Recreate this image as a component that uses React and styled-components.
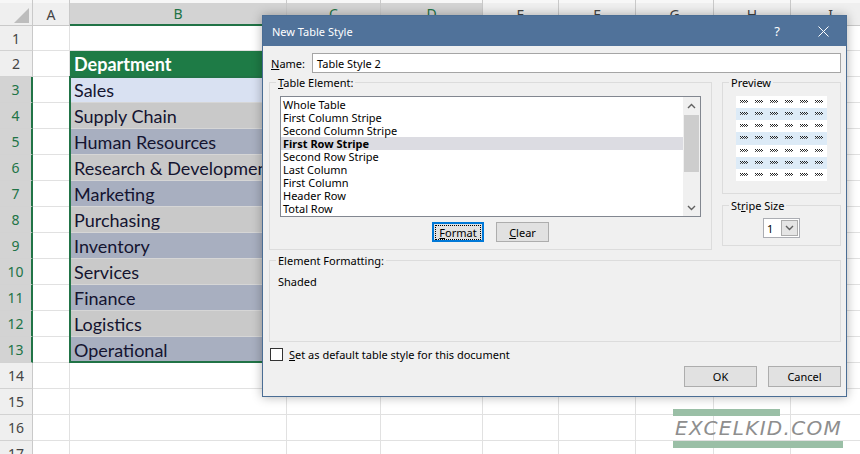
import React from 'react';
import styled, { createGlobalStyle } from 'styled-components';

const GlobalStyle = createGlobalStyle`
  html, body { margin: 0; padding: 0; background: #fff; }
  body { width: 860px; height: 454px; overflow: hidden; font-family: "Noto Sans", sans-serif; }
`;

const COLS = [33, 37, 217, 94, 102, 76, 77, 78, 77, 80];
const LETTERS = ['A', 'B', 'C', 'D', 'E', 'F', 'G', 'H', 'I'];
const SELECTED_COLS = ['B', 'C', 'D'];
const DEPARTMENTS = [
  'Sales', 'Supply Chain', 'Human Resources', 'Research & Development', 'Marketing',
  'Purchasing', 'Inventory', 'Services', 'Finance', 'Logistics', 'Operational',
];
const ELEMENTS = [
  'Whole Table', 'First Column Stripe', 'Second Column Stripe', 'First Row Stripe',
  'Second Row Stripe', 'Last Column', 'First Column', 'Header Row', 'Total Row',
];

const rowFill = (row) => {
  if (row === 2) return '#1e7b46';
  if (row === 3) return '#d9e1f2';
  if (row > 3 && row <= 13) return row % 2 === 0 ? '#c9c9c9' : '#a8afc0';
  return null;
};

const Page = styled.div`
  position: relative;
  width: 860px;
  height: 454px;
  overflow: hidden;
`;

const Sheet = styled.div`
  display: grid;
  grid-template-columns: ${COLS.map((c) => `${c}px`).join(' ')};
  grid-template-rows: 26px 25px repeat(16, 26px);
`;

const Corner = styled.div`
  box-sizing: border-box;
  display: flex;
  align-items: flex-end;
  justify-content: flex-end;
  padding: 0 3px 2px 0;
  background: linear-gradient(#f7f7f7 0 3px, #efefef 3px);
  border-right: 1px solid #c9c9c9;
  border-bottom: 1px solid #c9c9c9;
`;

const ColHead = styled.div`
  box-sizing: border-box;
  display: flex;
  align-items: center;
  justify-content: center;
  padding-top: 3px;
  font-size: 14px;
  color: ${(p) => (p.$sel ? '#217346' : '#444')};
  background: linear-gradient(#f7f7f7 0 3px, ${(p) => (p.$sel ? '#d3d3d3' : '#efefef')} 3px);
  border-right: 1px solid #c9c9c9;
  border-bottom: ${(p) => (p.$sel ? '2px solid #217346' : '1px solid #c9c9c9')};
`;

const RowHead = styled.div`
  box-sizing: border-box;
  display: flex;
  align-items: center;
  justify-content: center;
  font-size: 14px;
  color: ${(p) => (p.$sel ? '#217346' : '#444')};
  background: ${(p) => (p.$sel ? '#d3d3d3' : '#efefef')};
  border-bottom: 1px solid #d2d2d2;
  border-right: ${(p) => (p.$sel ? '2px solid #217346' : '1px solid #c9c9c9')};
`;

const Cell = styled.div`
  box-sizing: border-box;
  display: flex;
  align-items: center;
  padding-left: 4px;
  white-space: nowrap;
  overflow: hidden;
  font-family: Lato, "Liberation Sans", sans-serif;
  font-size: 18px;
  font-weight: ${(p) => (p.$head ? 700 : 400)};
  color: ${(p) => (p.$head ? '#fff' : '#141430')};
  background: ${(p) => p.$fill || '#fff'};
  border-right: 1px solid ${(p) => p.$fill || '#e1e1e1'};
  border-bottom: 1px solid ${(p) => (p.$fill ? (p.$head ? '#e4e4e4' : '#d6d6d6') : '#e1e1e1')};
`;

const Selection = styled.div`
  position: absolute;
  left: 69px;
  top: 76px;
  width: 420px;
  height: 287px;
  box-sizing: border-box;
  border: 2px solid #217346;
  pointer-events: none;
`;

/* ---------- dialog ---------- */

const Dialog = styled.div`
  position: absolute;
  left: 262px;
  top: 15px;
  width: 585px;
  height: 382px;
  box-sizing: border-box;
  border: 1px solid #4a6d94;
  background: #f0f0f0;
  box-shadow: 0 0 10px rgba(0, 0, 0, 0.3);
  font-family: "Noto Sans", sans-serif;
  font-size: 11px;
  color: #000;
  display: flex;
  flex-direction: column;
`;

const TitleBar = styled.div`
  height: 30px;
  display: flex;
  align-items: center;
  background: #50729a;
  color: #fff;
  padding-left: 9px;
`;

const Title = styled.div`
  flex: 1;
  font-size: 11px;
`;

const TitleButton = styled.div`
  width: 46px;
  height: 30px;
  display: flex;
  align-items: center;
  justify-content: center;
  font-size: 13px;
`;

const Body = styled.div`
  padding: 7px 5px 8px 6px;
  display: flex;
  flex-direction: column;
`;

const NameRow = styled.div`
  display: flex;
  align-items: center;
  height: 20px;
`;

const NameLabel = styled.div`
  width: 41px;
  padding-left: 2px;
`;

const TextInput = styled.div`
  flex: 1;
  height: 20px;
  box-sizing: border-box;
  border: 1px solid #a5a5a5;
  background: #fff;
  display: flex;
  align-items: center;
  padding-left: 4px;
`;

const Columns = styled.div`
  margin-top: 3px;
  display: grid;
  grid-template-columns: 443px 119px;
  column-gap: 10px;
  align-items: start;
`;

const Group = styled.fieldset`
  margin: ${(p) => p.$mt || 0}px 0 0 0;
  padding: 0;
  border: 1px solid #dcdcdc;
  min-width: 0;
  box-sizing: border-box;
`;

const Legend = styled.legend`
  margin-left: 6px;
  padding: 0 2px;
  line-height: 13px;
  font-size: 11px;
`;

const GroupInner = styled.div`
  padding: ${(p) => p.$pad};
  display: flex;
  flex-direction: column;
  align-items: ${(p) => p.$align || 'stretch'};
`;

const ListBox = styled.div`
  height: 121px;
  box-sizing: border-box;
  border: 1px solid #828790;
  background: #fff;
  display: flex;
`;

const Items = styled.div`
  flex: 1;
  padding-top: 1px;
`;

const Item = styled.div`
  height: 13px;
  line-height: 13px;
  padding-left: 2px;
  font-weight: ${(p) => (p.$active ? 700 : 400)};
  background: ${(p) => (p.$active ? '#dcdce2' : 'transparent')};
  white-space: nowrap;
`;

const ScrollBar = styled.div`
  width: 17px;
  background: #f0f0f0;
  display: flex;
  flex-direction: column;
`;

const ScrollArrow = styled.div`
  height: 17px;
  display: flex;
  align-items: center;
  justify-content: center;
`;

const Track = styled.div`
  flex: 1;
  display: flex;
  flex-direction: column;
`;

const Thumb = styled.div`
  margin: 1px 1px 0 1px;
  height: 57px;
  background: #cdcdcd;
`;

const ButtonRow = styled.div`
  display: flex;
  justify-content: ${(p) => p.$justify || 'center'};
  gap: ${(p) => p.$gap}px;
  margin-top: ${(p) => p.$mt}px;
`;

const Button = styled.div`
  width: ${(p) => p.$w}px;
  height: ${(p) => p.$h}px;
  box-sizing: border-box;
  display: flex;
  align-items: center;
  justify-content: center;
  background: #e1e1e1;
  border: ${(p) => (p.$focus ? '2px solid #0078d7' : '1px solid #adadad')};
  font-size: 11px;
`;

const FocusRing = styled.span`
  display: flex;
  align-items: center;
  justify-content: center;
  padding: 0 3px;
  height: 13px;
  outline: 1px dotted #000;
`;

const Preview = styled.div`
  width: 91px;
  height: 85px;
  display: grid;
  grid-template-rows: repeat(7, 1fr);
`;

const PreviewRow = styled.div`
  background: ${(p) => (p.$stripe ? '#ddebf7' : '#fff')};
  display: flex;
  align-items: center;
  gap: 7px;
  padding-left: 4px;
`;

const Select = styled.div`
  width: 37px;
  height: 20px;
  box-sizing: border-box;
  border: 1px solid #abadb3;
  background: #fff;
  display: flex;
  align-items: center;
`;

const SelectValue = styled.div`
  flex: 1;
  padding-left: 3px;
`;

const SelectButton = styled.div`
  width: 17px;
  height: 16px;
  margin-right: 1px;
  box-sizing: border-box;
  border: 1px solid #acacac;
  background: #e5e5e5;
  display: flex;
  align-items: center;
  justify-content: center;
`;

const Formatting = styled.div`
  height: 74px;
  padding: 7px 0 0 8px;
  box-sizing: border-box;
`;

const CheckRow = styled.div`
  margin-top: 6px;
  display: flex;
  align-items: center;
  gap: 6px;
  height: 13px;
  padding-left: 1px;
`;

const Checkbox = styled.div`
  width: 13px;
  height: 13px;
  box-sizing: border-box;
  border: 1px solid #333;
  background: #fff;
`;

/* ---------- watermark ---------- */

const Watermark = styled.div`
  position: absolute;
  left: 673px;
  top: 409px;
  display: flex;
  flex-direction: column;
`;

const Bar = styled.div`
  width: ${(p) => p.$w}px;
  height: 7px;
  background: #9abfa6;
`;

const Mark = styled.div`
  margin: -1px 0 0 2px;
  height: 26px;
  line-height: 26px;
  font-family: "DejaVu Sans", sans-serif;
  font-style: italic;
  font-size: 20px;
  letter-spacing: 1.3px;
  color: #8e8e8e;
`;

const Chevron = ({ up }) => (
  <svg width="9" height="6" viewBox="0 0 9 6">
    <polyline
      points={up ? '1,5 4.5,1.5 8,5' : '1,1 4.5,4.5 8,1'}
      fill="none"
      stroke="#606060"
      strokeWidth="1.4"
    />
  </svg>
);

const Squiggle = () => (
  <svg width="8" height="4" viewBox="0 0 8 4" shapeRendering="crispEdges">
    {[0, 2, 4, 6].map((x) => <rect key={`a${x}`} x={x} y={0} width="1" height="1" fill="#222" />)}
    {[1, 3, 5, 7].map((x) => <rect key={`b${x}`} x={x} y={1} width="1" height="1" fill="#222" />)}
    {[0, 2, 4, 6].map((x) => <rect key={`c${x}`} x={x} y={2} width="1" height="1" fill="#555" />)}
  </svg>
);

const App = () => {
  const rows = Array.from({ length: 17 }, (_, i) => i + 1);

  return (
    <Page>
      <GlobalStyle />
      <Sheet>
        <Corner>
          <svg width="15" height="15" viewBox="0 0 15 15">
            <polygon points="15,0 15,15 0,15" fill="#bdbdbd" />
          </svg>
        </Corner>
        {LETTERS.map((l) => (
          <ColHead key={l} $sel={SELECTED_COLS.includes(l)}>{l}</ColHead>
        ))}
        {rows.map((r) => (
          <React.Fragment key={r}>
            <RowHead $sel={r >= 3 && r <= 13}>{r}</RowHead>
            {LETTERS.map((l) => {
              const fill = SELECTED_COLS.includes(l) ? rowFill(r) : null;
              let text = '';
              if (l === 'B' && r === 2) text = 'Department';
              if (l === 'B' && r >= 3 && r <= 13) text = DEPARTMENTS[r - 3];
              return (
                <Cell key={l} $fill={fill} $head={r === 2 && !!fill}>{text}</Cell>
              );
            })}
          </React.Fragment>
        ))}
      </Sheet>
      <Selection />

      <Dialog>
        <TitleBar>
          <Title>New Table Style</Title>
          <TitleButton>?</TitleButton>
          <TitleButton>
            <svg width="11" height="11" viewBox="0 0 11 11">
              <path d="M0.5 0.5 L10.5 10.5 M10.5 0.5 L0.5 10.5" stroke="#fff" strokeWidth="1" />
            </svg>
          </TitleButton>
        </TitleBar>
        <Body>
          <NameRow>
            <NameLabel><u>N</u>ame:</NameLabel>
            <TextInput>Table Style 2</TextInput>
          </NameRow>

          <Columns>
            <Group>
              <Legend><u>T</u>able Element:</Legend>
              <GroupInner $pad="7px 10px 7px 10px">
                <ListBox>
                  <Items>
                    {ELEMENTS.map((e) => (
                      <Item key={e} $active={e === 'First Row Stripe'}>{e}</Item>
                    ))}
                  </Items>
                  <ScrollBar>
                    <ScrollArrow><Chevron up /></ScrollArrow>
                    <Track><Thumb /></Track>
                    <ScrollArrow><Chevron /></ScrollArrow>
                  </ScrollBar>
                </ListBox>
                <ButtonRow $gap={12} $mt={5}>
                  <Button $w={52} $h={20} $focus>
                    <FocusRing><u>F</u>ormat</FocusRing>
                  </Button>
                  <Button $w={53} $h={20}><u>C</u>lear</Button>
                </ButtonRow>
              </GroupInner>
            </Group>

            <div>
              <Group>
                <Legend>Preview</Legend>
                <GroupInner $pad="7px 0 12px 0" $align="center">
                  <Preview>
                    {Array.from({ length: 7 }, (_, i) => (
                      <PreviewRow key={i} $stripe={i % 2 === 1}>
                        {Array.from({ length: 6 }, (_, j) => <Squiggle key={j} />)}
                      </PreviewRow>
                    ))}
                  </Preview>
                </GroupInner>
              </Group>
              <Group $mt={5}>
                <Legend>St<u>r</u>ipe Size</Legend>
                <GroupInner $pad="6px 0 7px 0" $align="center">
                  <Select>
                    <SelectValue>1</SelectValue>
                    <SelectButton><Chevron /></SelectButton>
                  </Select>
                </GroupInner>
              </Group>
            </div>
          </Columns>

          <Group $mt={4}>
            <Legend>Element Formatting:</Legend>
            <Formatting>Shaded</Formatting>
          </Group>

          <CheckRow>
            <Checkbox />
            <span><u>S</u>et as default table style for this document</span>
          </CheckRow>

          <ButtonRow $justify="flex-end" $gap={11} $mt={5}>
            <Button $w={73} $h={21}>OK</Button>
            <Button $w={73} $h={21}>Cancel</Button>
          </ButtonRow>
        </Body>
      </Dialog>

      <Watermark>
        <Bar $w={107} />
        <Mark>EXCELKID.COM</Mark>
        <Bar $w={170} />
      </Watermark>
    </Page>
  );
};

export default App;
